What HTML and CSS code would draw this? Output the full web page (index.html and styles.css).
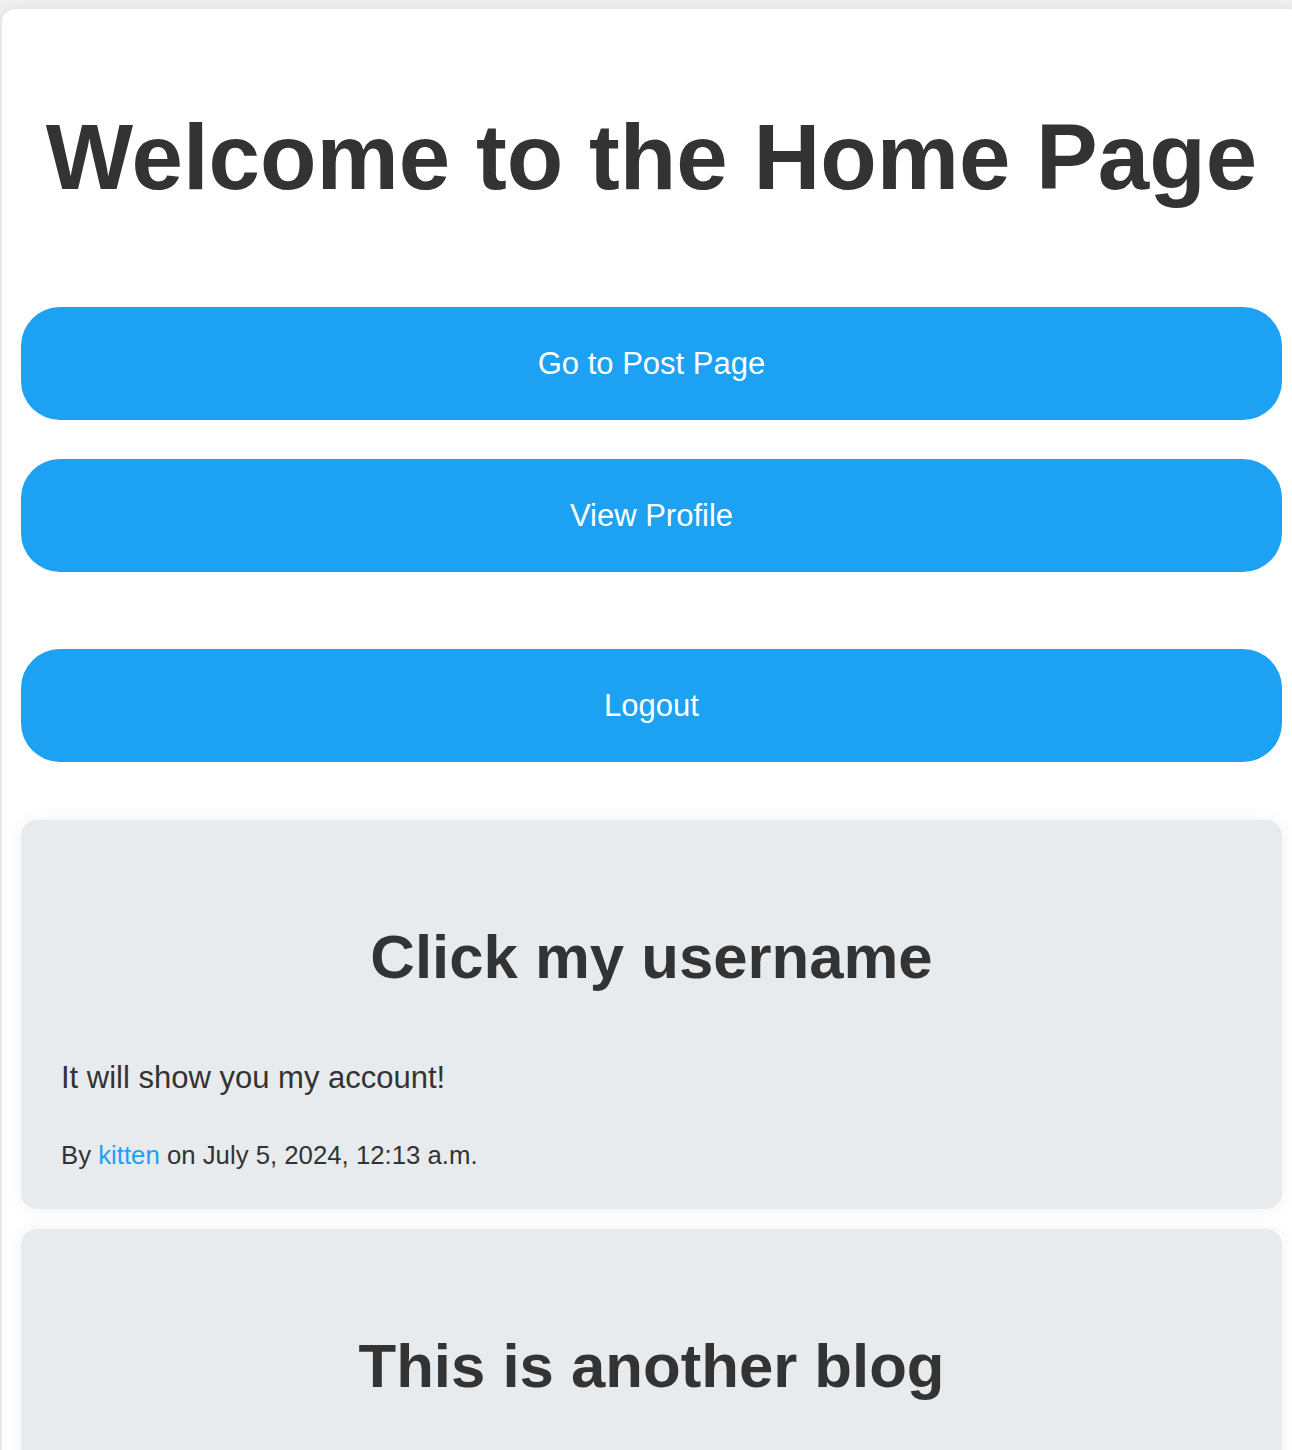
FILE: index.html
```html
<!DOCTYPE html>
<html lang="en">
<head>
<meta charset="utf-8">
<title>Home</title>
<link rel="stylesheet" href="styles.css">
</head>
<body>
<div class="container">
  <h1 class="title">Welcome to the Home Page</h1>
  <a class="btn" href="#">Go to Post Page</a>
  <a class="btn" href="#">View Profile</a>
  <form class="logout-form">
    <button class="btn" type="button">Logout</button>
  </form>
  <div class="posts">
    <div class="card">
      <h2 class="card-title">Click my username</h2>
      <p class="card-body">It will show you my account!</p>
      <p class="card-meta">By <a href="#" class="user">kitten</a> on July 5, 2024, 12:13 a.m.</p>
    </div>
    <div class="card">
      <h2 class="card-title">This is another blog</h2>
    </div>
  </div>
</div>
</body>
</html>
```
FILE: styles.css
```css
html, body {
  margin: 0;
  padding: 0;
}
body {
  background: #efefef;
  font-family: "Liberation Sans", Arial, sans-serif;
  color: #333333;
  overflow: hidden;
}
.container {
  background: #ffffff;
  margin: 9px 0 0 2px;
  box-sizing: border-box;
  padding: 19px 19px 40px 19px;
  border-radius: 13px;
  box-shadow: 0 0 10px rgba(0, 0, 0, 0.08);
  min-height: 1600px;
  display: flex;
  flex-direction: column;
  width: 1299px;
}
.title {
  font-size: 92.5px;
  font-weight: bold;
  line-height: 106px;
  margin: 76px 0 97px 0;
  text-align: center;
  width: 1261px;
}
.btn {
  display: block;
  box-sizing: border-box;
  width: 1261px;
  height: 113px;
  line-height: 113px;
  background: #1da1f2;
  color: #ffffff;
  text-align: center;
  text-decoration: none;
  font-family: "Liberation Sans", Arial, sans-serif;
  font-size: 31px;
  border: none;
  border-radius: 39px;
  padding: 0;
  margin-bottom: 39px;
}
.logout-form {
  margin: 38px 0 0 0;
}
.logout-form .btn {
  margin-bottom: 58px;
}
.posts {
  display: flex;
  flex-direction: column;
  gap: 20px;
  width: 1261px;
}
.card {
  background: #e8ebee;
  border-radius: 16px;
  padding: 40px 40px 40px 40px;
  box-shadow: 0 0 18px rgba(0, 0, 0, 0.06);
  height: 389px;
  box-sizing: border-box;
}
.card-title {
  font-size: 61.7px;
  line-height: 71px;
  font-weight: bold;
  text-align: center;
  margin: 61px 0 68px 0;
}
.card-body {
  font-size: 31px;
  line-height: 36px;
  margin: 0 0 44px 0;
}
.card-meta {
  font-size: 25.75px;
  line-height: 30px;
  margin: 0;
}
.user {
  color: #1da1f2;
  text-decoration: none;
}
```
